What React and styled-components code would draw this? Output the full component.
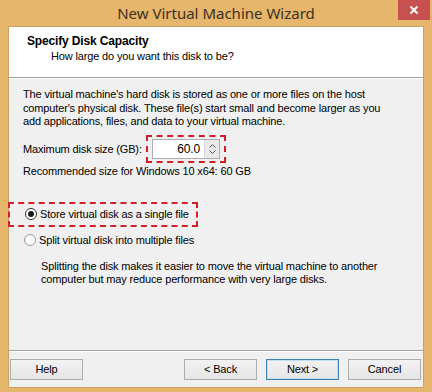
import React, { useState } from 'react';
import styled, { createGlobalStyle } from 'styled-components';

const GlobalStyle = createGlobalStyle`
  html, body {
    margin: 0;
    padding: 0;
    background: #e6b66d;
  }
  body {
    font-family: "Liberation Sans", Arial, sans-serif;
    font-size: 11px;
    letter-spacing: -0.15px;
    color: #000;
  }
`;

const Frame = styled.div`
  width: 432px;
  height: 392px;
  box-sizing: border-box;
  background: #e6b66d;
  display: flex;
  flex-direction: column;
  padding: 0 8px 4px 8px;
`;

const TitleBar = styled.div`
  position: relative;
  height: 26px;
  display: flex;
  align-items: center;
  justify-content: center;
  font-family: "Noto Sans", "Liberation Sans", sans-serif;
  font-size: 15px;
  letter-spacing: 0;
  color: #3e2f1c;
`;

const CloseButton = styled.div`
  position: absolute;
  top: 0;
  right: -6px;
  width: 32px;
  height: 20px;
  background: #c75050;
  display: flex;
  align-items: center;
  justify-content: center;
`;

const Client = styled.div`
  flex: 1;
  display: flex;
  flex-direction: column;
  background: #f0f0f0;
  border: 1px solid #c9a266;
`;

const Header = styled.div`
  height: 51px;
  background: #fff;
  border-bottom: 1px solid #a0a0a0;
  box-sizing: border-box;
  padding: 7px 0 0 18px;
`;

const Heading = styled.div`
  font-weight: bold;
  font-size: 12px;
  line-height: 15px;
`;

const SubHeading = styled.div`
  padding-left: 24px;
  line-height: 15px;
`;

const Body = styled.div`
  flex: 1;
  padding: 9px 14px 0 14px;
  display: flex;
  flex-direction: column;
  border-top: 1px solid #fff;
  white-space: nowrap;
`;

const Paragraph = styled.p`
  margin: 0;
  line-height: 13.5px;
  padding-left: ${p => p.indent || 0}px;
  margin-top: ${p => p.gap || 0}px;
`;

const SizeRow = styled.div`
  display: flex;
  align-items: center;
  margin-top: 6px;
  height: 28px;
`;

const Label = styled.span`
  width: 123px;
`;

const Highlight = styled.div`
  border: 2px dashed #d0202a;
  padding: 2px 4px;
  display: flex;
  align-items: center;
`;

const SpinBox = styled.div`
  width: 68px;
  height: 20px;
  box-sizing: border-box;
  border: 1px solid #abadb3;
  background: #fff;
  display: flex;
  align-items: stretch;
`;

const SpinValue = styled.div`
  flex: 1;
  text-align: right;
  padding-right: 4px;
  line-height: 18px;
  font-size: 12px;
`;

const SpinArrows = styled.div`
  width: 14px;
  background: #eaeaea;
  border-left: 1px solid #d6d6d6;
  display: flex;
  align-items: center;
  justify-content: center;
`;

const Recommended = styled.div`
  margin-top: 1px;
  line-height: 15px;
`;

const RadioHighlight = styled.div`
  align-self: flex-start;
  margin: 23px 0 0 -15px;
  border: 2px dashed #d0202a;
  padding: 3px 7px 3px 15px;
`;

const RadioRow = styled.label`
  display: flex;
  align-items: center;
  gap: 3px;
  line-height: 15px;
  margin-top: ${p => p.gap || 0}px;
  margin-left: ${p => p.shift || 0}px;
`;

const RadioDot = styled.span`
  width: 12px;
  height: 12px;
  box-sizing: border-box;
  border-radius: 50%;
  border: 1px solid ${p => (p.checked ? '#333' : '#9a9a9a')};
  background: #fff;
  display: flex;
  align-items: center;
  justify-content: center;
  &::after {
    content: '';
    width: 6px;
    height: 6px;
    border-radius: 50%;
    background: ${p => (p.checked ? '#1a1a1a' : 'transparent')};
  }
`;

const Footer = styled.div`
  height: 36px;
  border-top: 1px solid #a0a0a0;
  box-shadow: inset 0 1px 0 #fff;
  display: flex;
  align-items: center;
  padding: 0 2px 0 1px;
  gap: 9px;
`;

const Button = styled.button`
  width: 73px;
  height: 21px;
  font-family: inherit;
  font-size: 11px;
  letter-spacing: inherit;
  color: #000;
  background: linear-gradient(#f2f2f2, #e6e6e6);
  border: 1px solid ${p => (p.primary ? '#3c7fb1' : '#acacac')};
  box-shadow: ${p => (p.primary ? 'inset 0 0 0 1px #bfe0f5' : 'none')};
  padding: 0;
  margin-left: ${p => (p.push ? 'auto' : '0')};
`;

export default function App() {
  const [single, setSingle] = useState(true);

  return (
    <>
      <GlobalStyle />
      <Frame>
        <TitleBar>
          New Virtual Machine Wizard
          <CloseButton>
            <svg width="10" height="10" viewBox="0 0 10 10">
              <path d="M1.5 1.5 L8.5 8.5 M8.5 1.5 L1.5 8.5" stroke="#fff" strokeWidth="2" />
            </svg>
          </CloseButton>
        </TitleBar>
        <Client>
          <Header>
            <Heading>Specify Disk Capacity</Heading>
            <SubHeading>How large do you want this disk to be?</SubHeading>
          </Header>
          <Body>
            <Paragraph>
              The virtual machine's hard disk is stored as one or more files on the host
              <br />
              computer's physical disk. These file(s) start small and become larger as you
              <br />
              add applications, files, and data to your virtual machine.
            </Paragraph>
            <SizeRow>
              <Label>Maximum disk size (GB):</Label>
              <Highlight>
                <SpinBox>
                  <SpinValue>60.0</SpinValue>
                  <SpinArrows>
                    <svg width="7" height="12" viewBox="0 0 7 12">
                      <path d="M0.5 4.5 L3.5 1.5 L6.5 4.5 M0.5 7.5 L3.5 10.5 L6.5 7.5" stroke="#555" fill="none" />
                    </svg>
                  </SpinArrows>
                </SpinBox>
              </Highlight>
            </SizeRow>
            <Recommended>Recommended size for Windows 10 x64: 60 GB</Recommended>
            <RadioHighlight>
              <RadioRow onClick={() => setSingle(true)}>
                <RadioDot checked={single} />
                Store virtual disk as a single file
              </RadioRow>
            </RadioHighlight>
            <RadioRow gap={6} shift={1} onClick={() => setSingle(false)}>
              <RadioDot checked={!single} />
              Split virtual disk into multiple files
            </RadioRow>
            <Paragraph indent={18} gap={12}>
              Splitting the disk makes it easier to move the virtual machine to another
              <br />
              computer but may reduce performance with very large disks.
            </Paragraph>
          </Body>
          <Footer>
            <Button>Help</Button>
            <Button push>&lt; Back</Button>
            <Button primary>Next &gt;</Button>
            <Button>Cancel</Button>
          </Footer>
        </Client>
      </Frame>
    </>
  );
}
